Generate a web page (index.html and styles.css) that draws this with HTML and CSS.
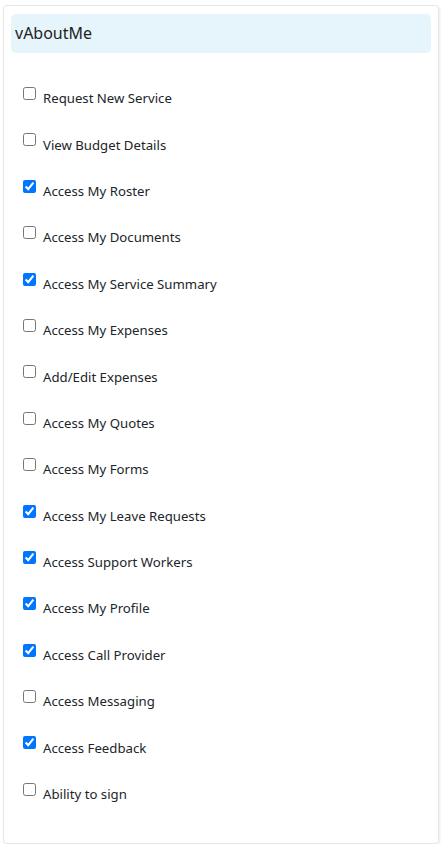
FILE: index.html
```html
<!DOCTYPE html>
<html lang="en">
<head>
  <meta charset="UTF-8" />
  <meta name="viewport" content="width=device-width, initial-scale=1" />
  <title>vAboutMe</title>
  <link rel="stylesheet" href="styles.css">
</head>
<body>
  <div class="card">
    <div class="card-header">vAboutMe</div>

    <div class="options">
      <label class="option"><input type="checkbox"><span>Request New Service</span></label>
      <label class="option"><input type="checkbox"><span>View Budget Details</span></label>
      <label class="option"><input type="checkbox" checked><span>Access My Roster</span></label>
      <label class="option"><input type="checkbox"><span>Access My Documents</span></label>
      <label class="option"><input type="checkbox" checked><span>Access My Service Summary</span></label>
      <label class="option"><input type="checkbox"><span>Access My Expenses</span></label>
      <label class="option"><input type="checkbox"><span>Add/Edit Expenses</span></label>
      <label class="option"><input type="checkbox"><span>Access My Quotes</span></label>
      <label class="option"><input type="checkbox"><span>Access My Forms</span></label>
      <label class="option"><input type="checkbox" checked><span>Access My Leave Requests</span></label>
      <label class="option"><input type="checkbox" checked><span>Access Support Workers</span></label>
      <label class="option"><input type="checkbox" checked><span>Access My Profile</span></label>
      <label class="option"><input type="checkbox" checked><span>Access Call Provider</span></label>
      <label class="option"><input type="checkbox"><span>Access Messaging</span></label>
      <label class="option"><input type="checkbox" checked><span>Access Feedback</span></label>
      <label class="option"><input type="checkbox"><span>Ability to sign</span></label>
    </div>
  </div>
</body>
</html>
```

FILE: styles.css
```css
body {
  margin: 0;
  background-color: #fff;
  color: #212529;
  font-family: 'Segoe UI', 'Noto Sans', 'Open Sans', sans-serif;
}
.card {
  width: 436px;
  height: 839px;
  margin: 5px 0 0 3px;
  border: 1px solid #e6e6e6;
  border-radius: 4px;
  box-shadow: 1px 1px 3px rgba(0,0,0,0.08);
  box-sizing: border-box;
  padding: 8px 7px 0 7px;
}
.card-header {
  height: 39px;
  background-color: #e6f5fb;
  border-radius: 5px;
  padding-left: 4px;
  font-size: 16px;
  line-height: 39px;
  color: #222;
}
.options {
  margin-top: 22px;
}
.option {
  display: flex;
  align-items: center;
  height: 46.4px;
  padding-left: 12px;
  font-size: 13.2px;
  cursor: pointer;
}
.option input {
  align-self: flex-start;
  margin: 12px 7px 0 0;
  width: 13px;
  height: 13px;
}
```
